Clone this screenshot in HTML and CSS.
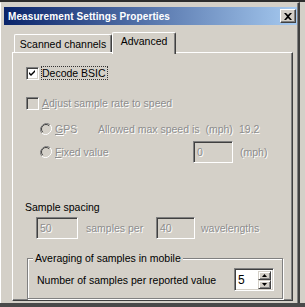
FILE: index.html
```html
<!DOCTYPE html>
<html>
<head>
<meta charset="utf-8">
<link rel="stylesheet" href="styles.css">
</head>
<body>
<div class="topband"></div>
<div class="window">
  <div class="titlebar">
    <span class="title">Measurement Settings Properties</span>
    <span class="close"><svg width="8" height="7" viewBox="0 0 8 7"><path d="M0 0h2l2 2 2-2h2L5 3.5 8 7H6L4 5 2 7H0l3-3.5z" fill="#000"/></svg></span>
  </div>
  <div class="dialog">
    <div class="tabs">
      <div class="tab">Scanned channels</div>
      <div class="tab active">Advanced</div>
    </div>
    <div class="panel">
      <div class="row r-decode">
        <span class="cb"><svg width="9" height="9" viewBox="0 0 9 9"><path d="M1 3l2 2 4-4v2L3 7 1 5z" fill="#000"/></svg></span>
        <span class="label focus">Decode BSIC</span>
      </div>
      <div class="row r-adjust dis">
        <span class="cb cb-dis"></span>
        <span class="label l-adjust"><u>A</u>djust sample rate to speed</span>
      </div>
      <div class="row r-gps dis">
        <span class="radio"><svg width="12" height="12" viewBox="0 0 12 12"><path d="M10.2 1.8A6 6 0 0 0 1.8 10.2" stroke="#808080" fill="none"/><path d="M1.8 10.2A6 6 0 0 0 10.2 1.8" stroke="#fff" fill="none"/><circle cx="6" cy="6" r="4.5" fill="#d4d0c8"/><path d="M9.2 2.8A4.5 4.5 0 0 0 2.8 9.2" stroke="#404040" fill="none"/></svg></span>
        <span class="label l-gps"><u>G</u>PS</span>
        <span class="l-allowed">Allowed max speed is&nbsp; (mph)</span>
        <span>19.2</span>
      </div>
      <div class="row r-fixed dis">
        <span class="radio"><svg width="12" height="12" viewBox="0 0 12 12"><path d="M10.2 1.8A6 6 0 0 0 1.8 10.2" stroke="#808080" fill="none"/><path d="M1.8 10.2A6 6 0 0 0 10.2 1.8" stroke="#fff" fill="none"/><circle cx="6" cy="6" r="4.5" fill="#d4d0c8"/><path d="M9.2 2.8A4.5 4.5 0 0 0 2.8 9.2" stroke="#404040" fill="none"/></svg></span>
        <span class="label l-fixed"><u>F</u>ixed value</span>
        <span class="edit e-fixed">0</span>
        <span class="l-mph">(mph)</span>
      </div>
      <div class="section">Sample spacing</div>
      <div class="row r-spacing dis">
        <span class="edit e-50">50</span>
        <span class="l-per">samples per</span>
        <span class="edit e-40">40</span>
        <span class="l-wave">wavelengths</span>
      </div>
      <fieldset class="group">
        <legend>Averaging of samples in mobile</legend>
        <div class="row r-num">
          <span class="l-num">Number of samples per reported value</span>
          <span class="spin">
            <span class="spin-val">5</span>
            <span class="spin-btns">
              <span class="sbtn"><svg width="5" height="3" viewBox="0 0 5 3"><path d="M2.5 0L5 3H0z" fill="#000"/></svg></span>
              <span class="sbtn"><svg width="5" height="3" viewBox="0 0 5 3"><path d="M0 0h5L2.5 3z" fill="#000"/></svg></span>
            </span>
          </span>
        </div>
      </fieldset>
    </div>
  </div>
</div>
<div class="bottomband"></div>
</body>
</html>
```
FILE: styles.css
```css
html, body {
  margin: 0;
  padding: 0;
}
body {
  background: #d4d0c8;
  width: 305px;
  height: 307px;
  overflow: hidden;
  font-family: "Liberation Sans", Arial, sans-serif;
  font-size: 10.5px;
  color: #000;
}
.topband {
  height: 2px;
  background: #2c2c2c;
}
.window {
  width: 300px;
  height: 301px;
  box-sizing: border-box;
  border-left: 1px solid #ffffff;
  border-top: 1px solid #d4d0c8;
  border-right: 2px solid #404040;
  box-shadow: inset -1px 0 0 #808080;
  padding: 4px 1px 0 3px;
  background: #d4d0c8;
}
.titlebar {
  height: 18px;
  background: linear-gradient(to right, #0a246a, #a6caf0);
  display: flex;
  align-items: center;
  justify-content: space-between;
}
.title {
  color: #fff;
  font-weight: bold;
  font-size: 10px;
  letter-spacing: 0.1px;
  padding-left: 4px;
  white-space: nowrap;
}
.close {
  width: 16px;
  height: 14px;
  box-sizing: border-box;
  margin-right: 1px;
  background: #d4d0c8;
  border-top: 1px solid #fff;
  border-left: 1px solid #fff;
  border-right: 1px solid #404040;
  border-bottom: 1px solid #404040;
  box-shadow: inset -1px -1px 0 #808080;
  display: flex;
  align-items: center;
  justify-content: center;
}
.dialog {
  padding: 7px 0 0 8px;
}
.tabs {
  display: flex;
  align-items: flex-end;
  height: 20px;
  padding-left: 2px;
}
.tab {
  box-sizing: border-box;
  height: 18px;
  width: 98px;
  border-top: 1px solid #fff;
  border-left: 1px solid #fff;
  border-right: 1px solid #404040;
  box-shadow: inset -1px 0 0 #808080;
  border-radius: 2px 2px 0 0;
  background: #d4d0c8;
  display: flex;
  align-items: center;
  justify-content: center;
  padding-top: 1px;
}
.tab.active {
  width: 64px;
  height: 22px;
  margin-bottom: -2px;
  position: relative;
  z-index: 1;
  align-items: flex-start;
  padding-top: 2px;
}
.panel {
  box-sizing: border-box;
  width: 281px;
  height: 249px;
  border-top: 1px solid #fff;
  border-left: 1px solid #fff;
  border-right: 1px solid #404040;
  border-bottom: 1px solid #404040;
  box-shadow: inset -1px -1px 0 #808080;
  padding: 13px 0 0 12px;
}
.row {
  display: flex;
  align-items: center;
  height: 14px;
  white-space: nowrap;
}
.dis {
  color: #8d8d8d;
  text-shadow: 1px 1px 0 #ffffff;
}
.cb {
  width: 13px;
  height: 13px;
  box-sizing: border-box;
  margin-left: 1px;
  background: #fff;
  border-top: 1px solid #808080;
  border-left: 1px solid #808080;
  border-right: 1px solid #fff;
  border-bottom: 1px solid #fff;
  box-shadow: inset 1px 1px 0 #404040, inset -1px -1px 0 #d4d0c8;
  display: flex;
  align-items: center;
  justify-content: center;
}
.cb-dis {
  background: #d4d0c8;
}
.focus {
  margin-left: 2px;
  padding: 0 1px 0 0;
  border: 1px dotted #333;
  line-height: 12px;
}
.l-adjust {
  margin-left: 3px;
}
.r-adjust {
  margin-top: 16px;
}
.r-gps {
  margin-top: 12px;
  padding-left: 15px;
}
.radio {
  width: 12px;
  height: 12px;
  display: flex;
}
.l-gps {
  width: 43px;
  margin-left: 3px;
}
.l-allowed {
  width: 141px;
}
.r-fixed {
  margin-top: 5px;
  height: 22px;
  padding-left: 15px;
}
.l-fixed {
  width: 138px;
  margin-left: 3px;
}
.edit {
  box-sizing: border-box;
  height: 22px;
  background: #d4d0c8;
  border-top: 1px solid #808080;
  border-left: 1px solid #808080;
  border-right: 1px solid #fff;
  border-bottom: 1px solid #fff;
  box-shadow: inset 1px 1px 0 #404040, inset -1px -1px 0 #d4d0c8;
  padding: 0 0 0 3px;
  display: flex;
  align-items: center;
}
.e-fixed {
  width: 40px;
}
.l-mph {
  margin-left: 7px;
}
.section {
  margin-top: 37px;
  height: 14px;
  line-height: 14px;
}
.r-spacing {
  margin-top: 3px;
  height: 22px;
}
.e-50 {
  width: 42px;
  margin-left: 11px;
}
.l-per {
  width: 70px;
  margin-left: 8px;
}
.e-40 {
  width: 39px;
}
.l-wave {
  margin-left: 6px;
}
.group {
  margin: 12px 0 0 2px;
  width: 256px;
  height: 48px;
  box-sizing: border-box;
  border: 1px solid #808080;
  box-shadow: inset 1px 1px 0 #fff, 1px 1px 0 #fff;
  padding: 3px 6px 0 9px;
}
.group legend {
  padding: 0 2px;
  margin-left: -4px;
  background: #d4d0c8;
  line-height: 14px;
}
.r-num {
  height: 23px;
  justify-content: space-between;
}
.spin {
  width: 40px;
  height: 23px;
  box-sizing: border-box;
  background: #fff;
  border-top: 1px solid #808080;
  border-left: 1px solid #808080;
  border-right: 1px solid #fff;
  border-bottom: 1px solid #fff;
  box-shadow: inset 1px 1px 0 #404040, inset -1px -1px 0 #d4d0c8;
  display: flex;
  align-items: stretch;
  padding: 2px 2px 1px 3px;
  margin-right: 2px;
}
.spin-val {
  flex: 1;
  display: flex;
  align-items: center;
  font-size: 12px;
}
.spin-btns {
  width: 13px;
  display: flex;
  flex-direction: column;
}
.sbtn {
  flex: 1;
  box-sizing: border-box;
  background: #d4d0c8;
  border-top: 1px solid #d4d0c8;
  border-left: 1px solid #d4d0c8;
  border-right: 1px solid #404040;
  border-bottom: 1px solid #404040;
  box-shadow: inset 1px 1px 0 #fff, inset -1px -1px 0 #808080;
  display: flex;
  align-items: center;
  justify-content: center;
}
.bottomband {
  height: 4px;
  background: #4a4a4a;
}
```
